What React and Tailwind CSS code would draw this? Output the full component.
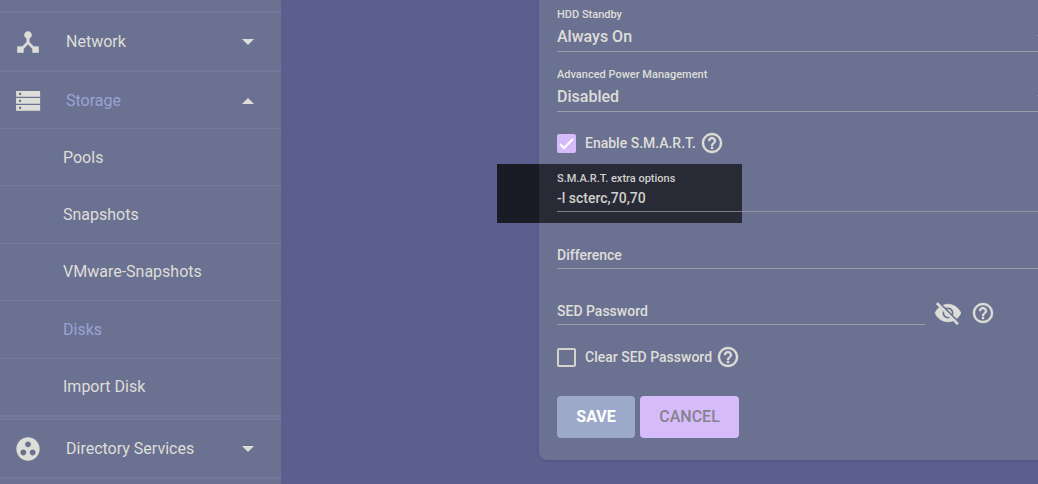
import React from "react";

const children = ["Pools", "Snapshots", "VMware-Snapshots", "Disks", "Import Disk"];

const iconPaths = {
  hub: "M17 16l-4-4V8.82C14.16 8.4 15 7.3 15 6c0-1.66-1.34-3-3-3S9 4.34 9 6c0 1.3.84 2.4 2 2.82V12l-4 4H3v5h5v-3.05l4-4.2 4 4.2V21h5v-5h-4z",
  storage: "M1.8 3.4h20.6v5H1.8zM4.3 5v1.8h1.8V5zM1.8 9.4h20.6v5H1.8zM4.3 11v1.8h1.8V11zM1.8 15.4h20.6v5H1.8zM4.3 17v1.8h1.8V17z",
  group: "M12 2C6.48 2 2 6.48 2 12s4.48 10 10 10 10-4.48 10-10S17.52 2 12 2zM8 17.5c-1.38 0-2.5-1.12-2.5-2.5s1.12-2.5 2.5-2.5 2.5 1.12 2.5 2.5-1.12 2.5-2.5 2.5zM9.5 8c0-1.38 1.12-2.5 2.5-2.5s2.5 1.12 2.5 2.5-1.12 2.5-2.5 2.5S9.5 9.38 9.5 8zm6.5 9.5c-1.38 0-2.5-1.12-2.5-2.5s1.12-2.5 2.5-2.5 2.5 1.12 2.5 2.5-1.12 2.5-2.5 2.5z",
  help: "M11 18h2v-2h-2v2zm1-16C6.48 2 2 6.48 2 12s4.48 10 10 10 10-4.48 10-10S17.52 2 12 2zm0 18c-4.41 0-8-3.59-8-8s3.59-8 8-8 8 3.59 8 8-3.59 8-8 8zm0-14c-2.21 0-4 1.79-4 4h2c0-1.1.9-2 2-2s2 .9 2 2c0 2-3 1.75-3 5h2c0-2.25 3-2.5 3-5 0-2.21-1.79-4-4-4z",
  hidden: "M12 7c2.76 0 5 2.24 5 5 0 .65-.13 1.26-.36 1.83l2.92 2.92c1.51-1.26 2.7-2.89 3.43-4.75-1.73-4.39-6-7.5-11-7.5-1.4 0-2.74.25-3.98.7l2.16 2.16C10.74 7.13 11.35 7 12 7zM2 4.27l2.28 2.28.46.46C3.08 8.3 1.78 10.02 1 12c1.73 4.39 6 7.5 11 7.5 1.55 0 3.03-.3 4.38-.84l.42.42L19.73 22 21 20.73 3.27 3 2 4.27zM7.53 9.8l1.55 1.55c-.05.21-.08.43-.08.65 0 1.66 1.34 3 3 3 .22 0 .44-.03.65-.08l1.55 1.55c-.67.33-1.41.53-2.2.53-2.76 0-5-2.24-5-5 0-.79.2-1.53.53-2.2zm4.31-.78l3.15 3.15.02-.16c0-1.66-1.34-3-3-3l-.17.01z",
};

function Icon({ name, className }) {
  return (
    <svg viewBox="0 0 24 24" className={`shrink-0 fill-current ${className}`} aria-hidden="true">
      <path d={iconPaths[name]} fillRule={name === "storage" ? "evenodd" : "nonzero"} />
    </svg>
  );
}

function Triangle({ up, className = "" }) {
  return (
    <svg viewBox="0 0 12 6" className={`h-[6px] w-3 shrink-0 fill-current ${className}`} aria-hidden="true">
      <path d={up ? "M0 6L6 0L12 6Z" : "M0 0H12L6 6Z"} />
    </svg>
  );
}

function NavItem({ icon, iconClass = "", label, open, active }) {
  return (
    <button type="button" aria-expanded={!!open} className="flex h-[59px] w-full shrink-0 items-center border-t-2 border-[#73799a] pl-[14px] pr-[27px] text-left">
      <Icon name={icon} className={`size-7 ${iconClass}`} />
      <span className={`ml-6 flex-1 ${active ? "text-[#9ba1d6]" : ""}`}>{label}</span>
      <Triangle up={open} />
    </button>
  );
}

function SelectField({ id, label, value }) {
  return (
    <div className="relative h-[60px] border-b border-[#9d9fa9]">
      <label htmlFor={id} className="block pt-4 text-[11px] leading-[14px]">{label}</label>
      <select id={id} defaultValue={value} className="mt-1 block h-[22px] w-full appearance-none bg-transparent text-base leading-[22px] outline-none">
        <option>{value}</option>
      </select>
      <Triangle className="absolute -right-[11px] top-[43px] text-[#a9aab4]" />
    </div>
  );
}

function HelpButton({ label }) {
  return (
    <button type="button" aria-label={label} className="shrink-0">
      <Icon name="help" className="size-6 stroke-current stroke-[0.4]" />
    </button>
  );
}

export default function App() {
  return (
    <div className="flex h-screen overflow-hidden bg-[#5a5f8e] font-['Roboto',sans-serif] text-[#deded9]">
      <nav className="flex w-[281px] shrink-0 flex-col overflow-hidden bg-[#6b7191] pt-[11px] text-base">
        <NavItem icon="hub" iconClass="stroke-current stroke-[0.5]" label="Network" />
        <NavItem icon="storage" label="Storage" open active />
        <ul className="-mt-px mb-px grid h-[289px] shrink-0 auto-rows-fr border-b-2 border-[#73799a]">
          {children.map((name) => (
            <li key={name} className="flex border-t border-[#747a98]">
              <a href="#" className={`flex flex-1 items-center pl-[63px] pt-px ${name === "Disks" ? "text-[#9ba1d6]" : ""}`}>{name}</a>
            </li>
          ))}
        </ul>
        <NavItem icon="group" label="Directory Services" />
        <div className="h-4 shrink-0 border-t-2 border-[#73799a]" />
      </nav>
      <main className="flex min-w-0 flex-1 flex-col items-stretch pl-[258px]">
        <form className="-mt-2 rounded-bl-lg bg-[#6b7191] pb-[22px] pl-[18px] font-medium shadow-sm" onSubmit={(e) => e.preventDefault()}>
          <SelectField id="standby" label="HDD Standby" value="Always On" />
          <SelectField id="apm" label="Advanced Power Management" value="Disabled" />

          <div className="mt-[19px] flex h-6 items-center text-sm">
            <span className="relative flex size-[19px]">
              <input id="smart" type="checkbox" defaultChecked className="size-[19px] appearance-none rounded-xs bg-[#d6bbfb]" />
              <svg viewBox="0 0 19 19" className="pointer-events-none absolute inset-0 fill-none stroke-white stroke-2" aria-hidden="true">
                <path d="M3 10L7 14L16 5" />
              </svg>
            </span>
            <label htmlFor="smart" className="ml-[9px] mr-1">Enable S.M.A.R.T.</label>
            <HelpButton label="About S.M.A.R.T." />
          </div>

          <div className="relative mt-[9px] h-12">
            <div className="absolute -left-[60px] top-0 flex h-[59px] w-[245px]">
              <div className="w-[42px] bg-[#191b25]" />
              <div className="flex-1 bg-[#282a35]" />
            </div>
            <div className="relative h-full border-b border-[#a0a2ac]/70 pt-2 text-[#d0d0cd]">
              <label htmlFor="options" className="block text-[11px] leading-[14px]">S.M.A.R.T. extra options</label>
              <input id="options" defaultValue="-l scterc,70,70" className="mt-1 block h-4 w-full bg-transparent text-sm outline-none" />
            </div>
          </div>

          <div className="mt-[33px] flex h-6 items-start border-b border-[#9fa09f] text-sm">
            <label htmlFor="difference">Difference</label>
            <input id="difference" className="min-w-0 flex-1 bg-transparent outline-none" />
          </div>

          <div className="mt-[30px] flex h-[26px] items-start pr-[43px]">
            <div className="flex h-full min-w-0 flex-1 items-start border-b border-[#9fa09f] pt-0.5 text-sm">
              <label htmlFor="sed">SED Password</label>
              <input id="sed" type="password" className="min-w-0 flex-1 bg-transparent outline-none" />
            </div>
            <button type="button" aria-label="Show password" className="ml-[9px] mr-[9px]">
              <Icon name="hidden" className="size-7 stroke-current stroke-[0.6]" />
            </button>
            <span className="flex h-7 items-center"><HelpButton label="About SED Password" /></span>
          </div>

          <div className="mt-5 flex h-6 items-center text-sm">
            <input id="clear" type="checkbox" className="size-[19px] appearance-none rounded-xs border-2 border-[#d2d2ce]" />
            <label htmlFor="clear" className="ml-[9px] mr-1">Clear SED Password</label>
            <HelpButton label="About clearing the SED password" />
          </div>

          <div className="mt-[27px] flex gap-[5px] text-base">
            <button type="submit" className="h-[42px] w-[78px] rounded bg-[#9da9c8] font-bold text-white">SAVE</button>
            <button type="button" className="h-[42px] w-[99px] rounded bg-[#d6bbfb] text-[#85818d]">CANCEL</button>
          </div>
        </form>
      </main>
    </div>
  );
}
